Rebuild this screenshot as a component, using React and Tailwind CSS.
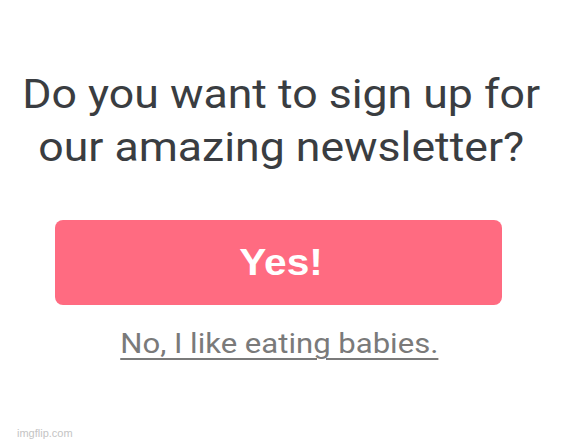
import React from "react";

function App() {
  return (
    <div className="relative w-[562px] h-[444px] bg-white overflow-hidden">
      <div className="flex flex-col items-center pt-[68px]">
        <h1
          className="text-center text-[40px] leading-[53px] text-[#3a3d41] font-normal scale-x-[1.115]"
          style={{ fontFamily: "Roboto, sans-serif" }}
        >
          Do you want to sign up for
          <br />
          our amazing newsletter?
        </h1>

        <button className="mt-[46px] mr-[5px] w-[447px] h-[85px] rounded-[8px] bg-[#ff6b81] text-white text-[37px] font-bold font-['Liberation_Sans',Arial,sans-serif]">
          <span className="inline-block scale-x-[1.1] ml-[6px]">Yes!</span>
        </button>

        <a
          href="#"
          className="mt-[22px] mr-[4px] text-[28px] leading-[1.2] text-[#7a7a7a] underline underline-offset-[5px] decoration-[1.5px] scale-x-[1.11]"
          style={{ fontFamily: "Roboto, sans-serif" }}
        >
          No, I like eating babies.
        </a>
      </div>

      <div className="absolute left-[17px] bottom-[3px] text-[11px] text-[#c4c4c4] font-['Liberation_Sans',Arial,sans-serif]">
        imgflip.com
      </div>
    </div>
  );
}

export default App;
